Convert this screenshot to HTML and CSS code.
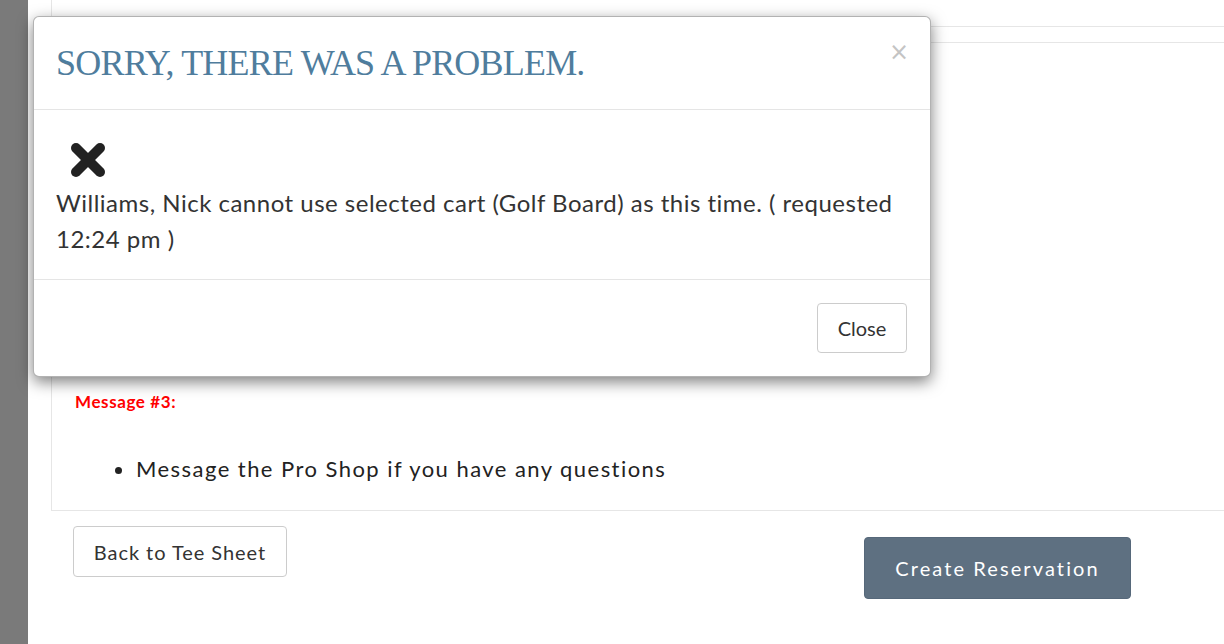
FILE: index.html
```html
<!DOCTYPE html>
<html lang="en">
    <head>
        <meta charset="UTF-8">
        <meta name="viewport" content="width=device-width, initial-scale=1" />

        <title>Reservation</title>

        <link rel="stylesheet" href="styles.css">
    </head>

    <body>
        <div class="layout">
            <div class="sidebar"></div>

            <div class="main">
                <div class="panel panelPrev"></div>

                <div class="panel">
                    <div class="messageLabel">Message #3:</div>
                    <ul class="messageList">
                        <li>Message the Pro Shop if you have any questions</li>
                    </ul>
                </div>

                <div class="actions">
                    <button class="btn btnDefault">Back to Tee Sheet</button>
                    <button class="btn btnPrimary">Create Reservation</button>
                </div>
            </div>
        </div>

        <div class="modal">
            <div class="modalHeader">
                <h4 class="modalTitle">Sorry, there was a problem.</h4>
                <span class="close">&times;</span>
            </div>
            <div class="modalBody">
                <svg class="errorIcon" width="36" height="34" viewBox="0 0 36 34">
                    <line x1="6" y1="5" x2="30" y2="29" />
                    <line x1="30" y1="5" x2="6" y2="29" />
                </svg>
                <p class="errorText">Williams, Nick cannot use selected cart (Golf Board) as this time. ( requested 12:24 pm )</p>
            </div>
            <div class="modalFooter">
                <button class="btn btnClose">Close</button>
            </div>
        </div>
    </body>
</html>
```

FILE: styles.css
```css
body {
    font-family: Lato, "Open Sans", Arial, sans-serif;
    margin: 0;
    color: #222;
    background-color: #fff;
    overflow: hidden;
}

.layout {
    display: flex;
    height: 644px;
}

.sidebar {
    width: 28px;
    flex-shrink: 0;
    background-color: #7a7a7a;
}

.main {
    flex: 1;
    overflow: hidden;
}

.panel {
    margin-left: 23px;
    margin-right: -2px;
    border: 1px solid #e6e6e6;
    padding: 349px 23px 26px;
}

.panelPrev {
    height: 26px;
    padding: 0;
    border-top: none;
    margin-bottom: 15px;
}

.messageLabel {
    color: #f00;
    font-weight: bold;
    font-size: 17px;
    line-height: 20px;
    letter-spacing: 0.6px;
}

.messageList {
    margin: 42px 0 0;
    padding-left: 61px;
    font-size: 22px;
    line-height: 30px;
    letter-spacing: 1.45px;
}

.actions {
    display: flex;
    align-items: flex-start;
    padding: 15px 93px 0 45px;
}

.btn {
    font-family: Lato, "Open Sans", Arial, sans-serif;
    font-size: 20px;
    border-radius: 4px;
    cursor: pointer;
    box-sizing: border-box;
}

.btnDefault {
    background-color: #fff;
    border: 1px solid #ccc;
    color: #333;
    height: 51px;
    width: 214px;
    padding: 0;
    letter-spacing: 0.95px;
}

.btnPrimary {
    margin-left: auto;
    margin-top: 11px;
    background-color: #5e7081;
    border: 1px solid #56687a;
    color: #fff;
    height: 62px;
    width: 267px;
    padding: 0;
    letter-spacing: 2.1px;
}

/* error dialog */
.modal {
    position: absolute;
    left: 33px;
    top: 16px;
    width: 898px;
    box-sizing: border-box;
    background-color: #fff;
    border: 1px solid rgba(0, 0, 0, 0.3);
    border-radius: 6px;
    box-shadow: 0 5px 15px rgba(0, 0, 0, 0.5);
}

.modalHeader {
    display: flex;
    justify-content: space-between;
    align-items: flex-start;
    padding: 22px 22px;
    border-bottom: 1px solid #e5e5e5;
}

.modalTitle {
    margin: 0;
    font-family: "Liberation Serif", "Times New Roman", serif;
    font-weight: normal;
    font-size: 36px;
    line-height: 48px;
    letter-spacing: -0.8px;
    text-transform: uppercase;
    color: #4f7d9d;
}

.close {
    font-family: "DejaVu Sans", Arial, sans-serif;
    font-size: 24px;
    line-height: 24px;
    margin: 1px -1px 0 0;
    color: #c4c4c4;
}

.modalBody {
    padding: 22px;
    border-bottom: 1px solid #e5e5e5;
}

.errorIcon {
    display: block;
    margin: 11px 0 8px 14px;
}

.errorIcon line {
    stroke: #222;
    stroke-width: 10;
    stroke-linecap: round;
}

.errorText {
    margin: 0;
    font-size: 24px;
    line-height: 36px;
    letter-spacing: 0.5px;
    color: #333;
}

.modalFooter {
    display: flex;
    justify-content: flex-end;
    padding: 23px;
}

.btnClose {
    background-color: #fff;
    border: 1px solid #ccc;
    color: #333;
    height: 50px;
    width: 90px;
    padding: 0;
}
```
